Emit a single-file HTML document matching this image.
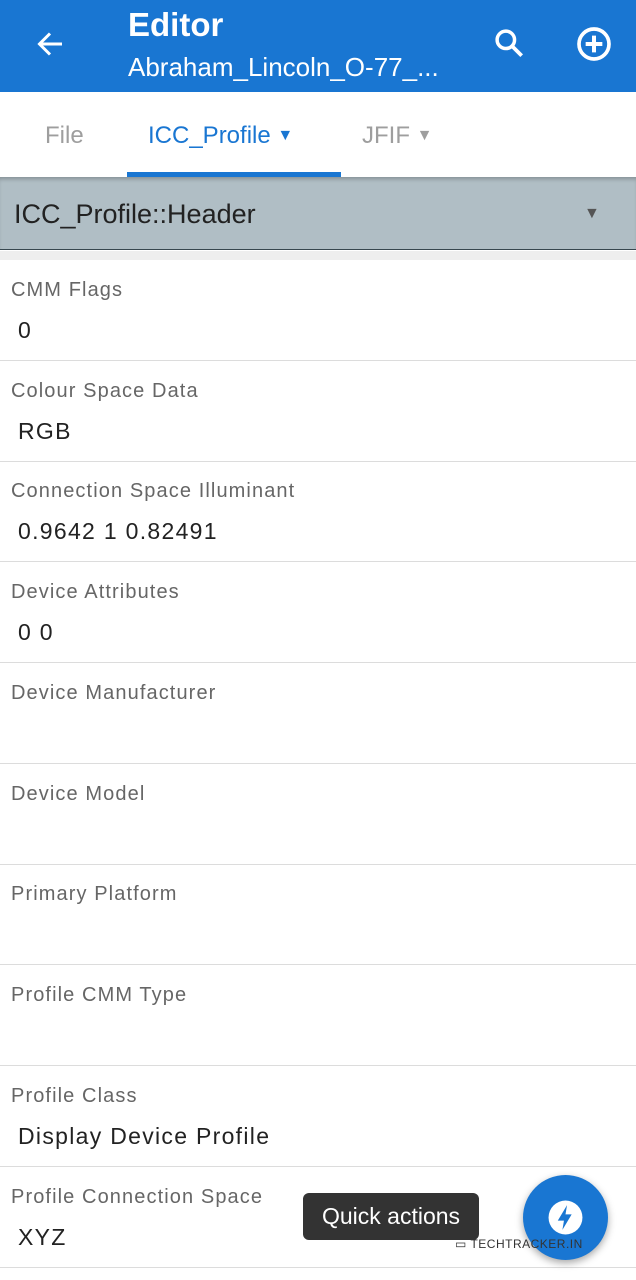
<!DOCTYPE html><html><head><style>
body{margin:0;width:636px;height:1280px;overflow:hidden;background:#fff;font-family:"Liberation Sans",sans-serif;position:relative}
.top{position:absolute;left:0;top:0;width:636px;height:92px;background:#1976d2;color:#fff}
.t1{position:absolute;left:128px;top:6px;font-size:33px;font-weight:bold}
.t2{position:absolute;left:128px;top:52px;font-size:26px}
.tabs{position:absolute;top:92px;left:0;width:636px;height:85px;background:#fff}
.tab{position:absolute;top:30px;font-size:24px;color:#9e9e9e}
.bar{position:absolute;top:177px;left:0;width:636px;height:72px;background:#b0bec5;border-bottom:1.5px solid #37474f;box-shadow:inset 0 4px 4px -2px rgba(0,0,0,.25)}
.strip{position:absolute;top:251px;left:0;width:636px;height:9px;background:#eeeeee}
.row{position:absolute;left:0;width:636px;height:100px;border-bottom:1.5px solid #dcdcdc}
.lab{position:absolute;left:11px;top:19px;font-size:20px;color:#666;letter-spacing:1.1px}
.val{position:absolute;left:18px;top:57px;font-size:23px;color:#222;letter-spacing:1.3px}
</style></head><body>
<div class="top">
<svg style="position:absolute;left:32px;top:26px" width="36" height="36" viewBox="0 0 24 24"><path d="M20 12H5M12 5l-7 7 7 7" stroke="#fff" stroke-width="2" fill="none"/></svg>
<div class="t1">Editor</div><div class="t2">Abraham_Lincoln_O-77_...</div>
<svg style="position:absolute;left:490px;top:24px" width="38" height="38" viewBox="0 0 24 24"><circle cx="10" cy="10" r="5.5" stroke="#fff" stroke-width="2.2" fill="none"/><path d="M14 14l6 6" stroke="#fff" stroke-width="2.4"/></svg>
<svg style="position:absolute;left:574px;top:24px" width="40" height="40" viewBox="0 0 24 24"><circle cx="12" cy="12" r="9" stroke="#fff" stroke-width="2.2" fill="none"/><path d="M12 7v10M7 12h10" stroke="#fff" stroke-width="2.4"/></svg>
</div>
<div class="tabs">
<div class="tab" style="left:45px">File</div>
<div class="tab" style="left:148px;color:#1976d2">ICC_Profile <span style="font-size:16px;position:relative;top:-3px">▼</span></div>
<div class="tab" style="left:362px">JFIF <span style="font-size:16px;position:relative;top:-3px">▼</span></div>
<div style="position:absolute;left:127px;top:80px;width:214px;height:5px;background:#1976d2"></div>
</div>
<div class="bar"><div style="position:absolute;left:14px;top:22px;font-size:27px;color:#222">ICC_Profile::Header</div><div style="position:absolute;left:584px;top:28px;font-size:16px;color:#555">▼</div></div>
<div class="strip"></div>
<div class="row" style="top:260px"><div class="lab">CMM Flags</div><div class="val">0</div></div>
<div class="row" style="top:361px"><div class="lab">Colour Space Data</div><div class="val">RGB</div></div>
<div class="row" style="top:461px"><div class="lab">Connection Space Illuminant</div><div class="val">0.9642 1 0.82491</div></div>
<div class="row" style="top:562px"><div class="lab">Device Attributes</div><div class="val">0 0</div></div>
<div class="row" style="top:663px"><div class="lab">Device Manufacturer</div></div>
<div class="row" style="top:764px"><div class="lab">Device Model</div></div>
<div class="row" style="top:864px"><div class="lab">Primary Platform</div></div>
<div class="row" style="top:965px"><div class="lab">Profile CMM Type</div></div>
<div class="row" style="top:1066px"><div class="lab">Profile Class</div><div class="val">Display Device Profile</div></div>
<div class="row" style="top:1167px"><div class="lab">Profile Connection Space</div><div class="val">XYZ</div></div>
<div style="position:absolute;left:303px;top:1193px;width:176px;height:47px;background:#333;border-radius:6px;color:#fff;font-size:23px;line-height:47px;text-align:center">Quick actions</div>
<div style="position:absolute;left:523px;top:1175px;width:85px;height:85px;border-radius:50%;background:#1976d2;box-shadow:0 3px 8px rgba(0,0,0,.35)">
<svg style="position:absolute;left:24px;top:24px" width="37" height="37" viewBox="0 0 24 24"><circle cx="12" cy="12" r="11" fill="#fff"/><path d="M13 4l-6 10h4l-1 6 6-10h-4z" fill="#1976d2"/></svg></div>
<div style="position:absolute;left:455px;top:1237px;font-size:12px;color:#333;letter-spacing:.5px">▭ TECHTRACKER.IN</div>
</body></html>
